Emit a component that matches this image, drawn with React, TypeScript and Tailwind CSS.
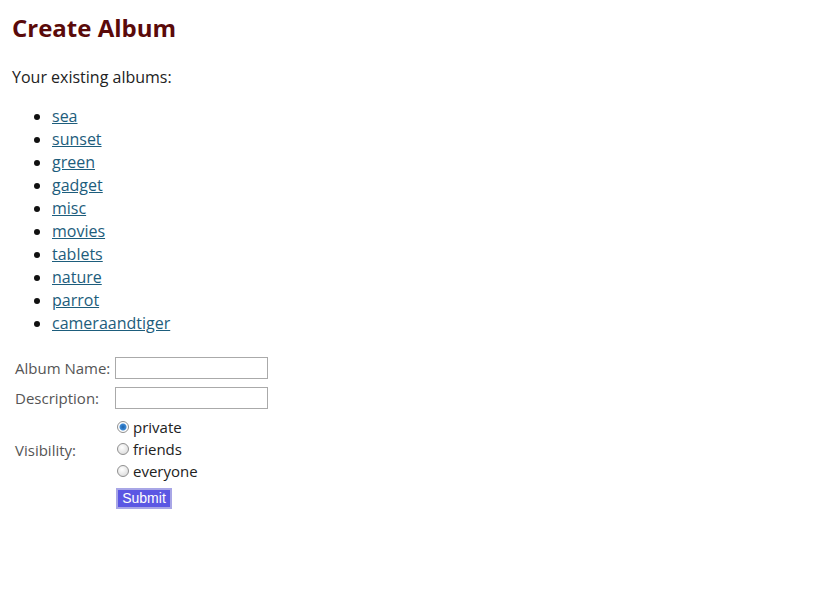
import { useState } from "react";

const albums = ["sea", "sunset", "green", "gadget", "misc", "movies", "tablets", "nature", "parrot", "cameraandtiger"];

const App = () => {
  const [visibility, setVisibility] = useState("private");

  return (
    <div className="min-h-screen bg-white px-3 pt-[13px] font-['Open_Sans',sans-serif] text-[#222]">
      <h1 className="text-[24px] leading-[30px] font-bold text-[#5a0a0a]">Create Album</h1>

      <p className="mt-[24px] text-[16px] leading-[20px]">Your existing albums:</p>

      <ul className="mt-[18px] ml-[40px] list-disc text-[16px] leading-[23px] marker:text-[#111]">
        {albums.map((a) => (
          <li key={a}>
            <a href="#" className="text-[#1d5d7c] underline">
              {a}
            </a>
          </li>
        ))}
      </ul>

      {/* Form */}
      <form className="mt-[22px] grid grid-cols-[100px_auto] items-center gap-y-[8px] pl-[3px] text-[15px] leading-[22px] text-[#555]">
        <label>Album Name:</label>
        <input type="text" className="h-[22px] w-[153px] border border-[#aaa] bg-white px-1 outline-none" />

        <label>Description:</label>
        <input type="text" className="h-[22px] w-[153px] border border-[#aaa] bg-white px-1 outline-none" />

        <label>Visibility:</label>
        <div className="-mt-[1px] flex flex-col text-[#222]">
          {["private", "friends", "everyone"].map((v) => (
            <label key={v} className="flex h-[22px] items-center gap-[4px] pl-[2px]">
              <input
                type="radio"
                name="visibility"
                checked={visibility === v}
                onChange={() => setVisibility(v)}
                className="h-[12px] w-[12px] appearance-none rounded-full border border-[#8f8f8f] bg-[radial-gradient(circle_at_40%_35%,#fff_0,#ddd_80%)] checked:bg-[radial-gradient(circle,#1a5fa8_0,#3d8ad6_3px,#fff_4px)]"
              />
              {v}
            </label>
          ))}
        </div>

        <span />
        <div className="-mt-[4px]">
          <button
            type="submit"
            className="ml-[1px] h-[21px] w-[56px] border-2 border-[#a8a6e6] bg-[#5b57e3] font-['Liberation_Sans',sans-serif] text-[14px] leading-none text-white"
          >
            Submit
          </button>
        </div>
      </form>
    </div>
  );
};

export default App;
